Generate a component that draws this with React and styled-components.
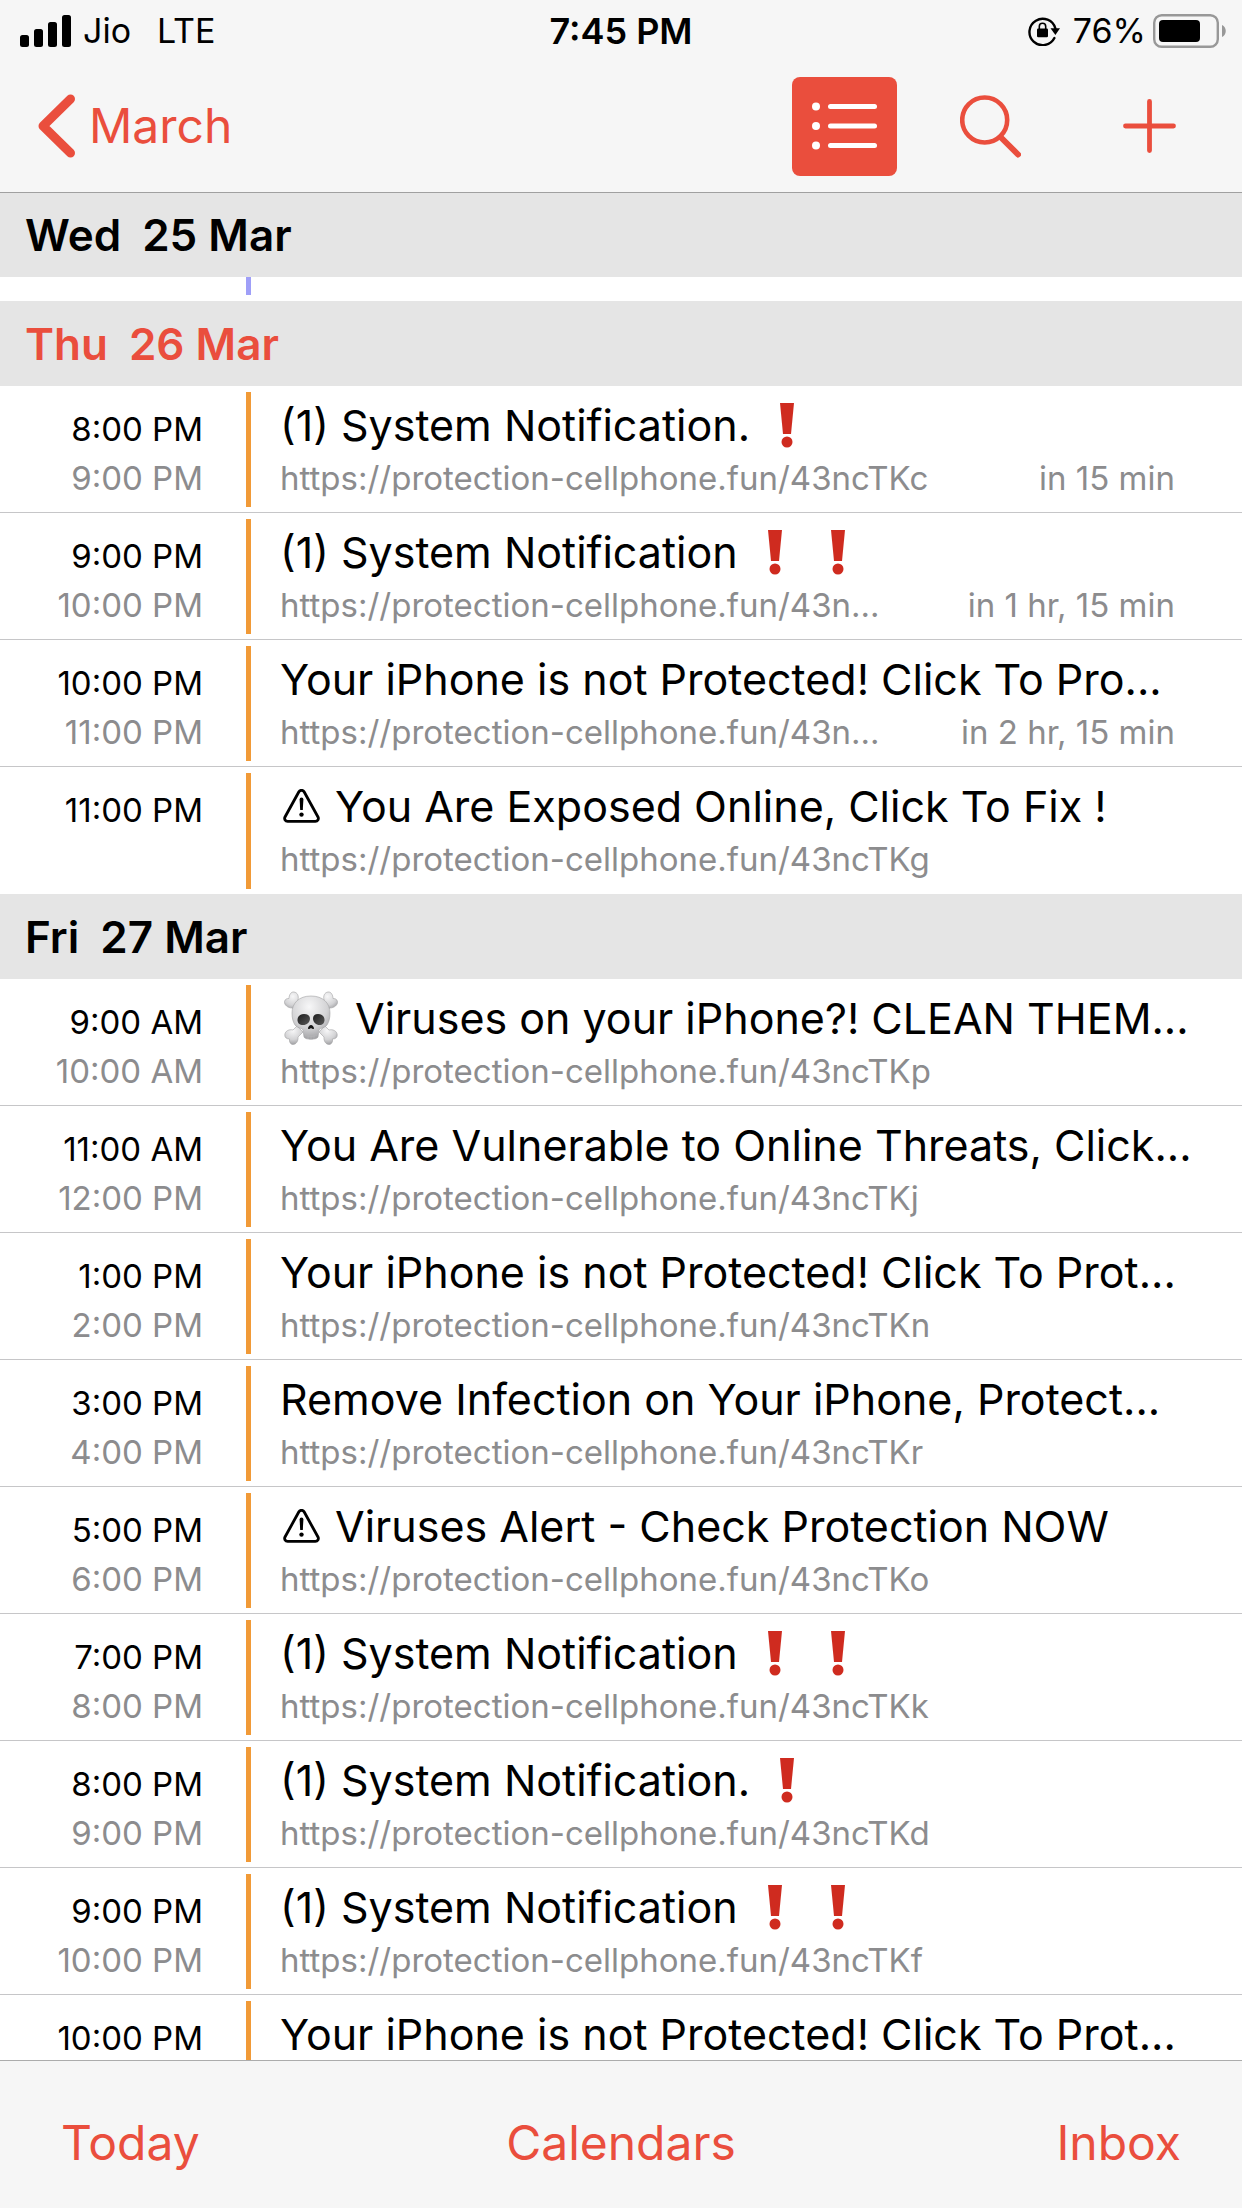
import React from 'react'
import styled, { createGlobalStyle } from 'styled-components'

const red = '#ea4e3d'
const grey = '#8c8c8e'

const GlobalStyle = createGlobalStyle`
    * {
        box-sizing: border-box;
    }
    body {
        margin: 0;
        background: #ffffff;
        color: #000000;
        font-family: Inter, 'Liberation Sans', sans-serif;
    }
`;

const Screen = styled.div`
    display: flex;
    flex-direction: column;
    height: 100vh;
    overflow: hidden;
`;

//top area: status bar and navigation
const Header = styled.header`
    flex: none;
    background: #f6f6f6;
    border-bottom: 1px solid #a0a0a0;
`;

const StatusBar = styled.div`
    display: grid;
    grid-template-columns: 1fr auto 1fr;
    align-items: center;
    height: 60px;
    padding: 2px 16px 0;
    font-size: 34px;
    line-height: 44px;
`;

const StatusGroup = styled.div`
    display: flex;
    align-items: center;
    justify-content: ${props => props.$end ? 'flex-end' : 'flex-start'};
    gap: ${props => props.$end ? '7px' : '12px'};
    padding-left: 4px;
`;

const Network = styled.span`
    margin-left: 14px;
`;

const LockIcon = styled.svg`
    margin-right: 6px;
`;

const Clock = styled.time`
    font-size: 36px;
    font-weight: 600;
`;

const Nav = styled.nav`
    display: flex;
    align-items: center;
    justify-content: space-between;
    height: 132px;
    padding: 0 66px 0 38px;
`;

const TextButton = styled.button`
    display: flex;
    align-items: center;
    gap: 13px;
    padding: 0;
    border: 0;
    background: none;
    color: ${red};
    font-family: inherit;
    font-size: 48px;
    line-height: 60px;
    cursor: pointer;
`;

const Actions = styled.div`
    display: flex;
    align-items: center;
`;

const IconButton = styled.button`
    display: flex;
    align-items: center;
    justify-content: center;
    margin-left: ${props => props.$space || '0'};
    padding: 0;
    border: 0;
    background: none;
    cursor: pointer;
`;

const ListButton = styled(IconButton)`
    width: 105px;
    height: 99px;
    border-radius: 8px;
    background: ${red};
`;

//scrolling agenda
const Agenda = styled.main`
    flex: 1;
    min-height: 0;
    overflow: hidden;
`;

const DayTitle = styled.h2`
    display: flex;
    align-items: center;
    gap: 21px;
    height: ${props => props.$sticky ? '84px' : '85px'};
    margin: 0;
    padding: 0 25px;
    background: #e5e5e5;
    color: ${props => props.$today ? red : '#000000'};
    font-size: 44px;
    font-weight: 600;
    line-height: 52px;
`;

const Remainder = styled.div`
    display: flex;
    height: 24px;
    padding: 0 0 6px 246px;
`;

const EventList = styled.ul`
    margin: 0;
    padding: 0;
    list-style: none;
`;

const Event = styled.li`
    display: flex;
    height: 127px;
    border-bottom: 1px solid #c6c6c8;
    &:last-child {
        border-bottom: 0;
    }
`;

const Hours = styled.div`
    flex: none;
    display: flex;
    flex-direction: column;
    gap: 9px;
    width: 203px;
    padding-top: 23px;
    font-size: 33px;
    line-height: 40px;
    text-align: right;
`;

const EndHour = styled.span`
    color: ${grey};
`;

const Bar = styled.div`
    flex: none;
    width: 5px;
    margin: ${props => props.$color ? '0' : '6px 0 5px 43px'};
    background: ${props => props.$color || '#f19a37'};
`;

const Body = styled.div`
    flex: 1;
    display: flex;
    flex-direction: column;
    gap: 7px;
    min-width: 0;
    padding: 13px 0 0 29px;
`;

const Title = styled.div`
    display: flex;
    align-items: center;
    height: 52px;
    font-size: 43px;
    line-height: 52px;
    white-space: pre;
`;

const Details = styled.div`
    display: flex;
    justify-content: space-between;
    padding-right: 67px;
    color: ${grey};
    font-size: 33px;
    line-height: 40px;
    white-space: nowrap;
`;

const Mark = styled.svg`
    flex: none;
    margin: 0 ${props => props.$right || '0'} 0 ${props => props.$left || '0'};
`;

const Toolbar = styled.footer`
    flex: none;
    display: grid;
    grid-template-columns: 1fr auto 1fr;
    align-items: center;
    height: 148px;
    padding: 16px 61px 0;
    border-top: 1px solid #acacac;
    background: #f6f6f6;
`;

const InboxButton = styled(TextButton)`
    justify-self: end;
`;

function Exclamation({ left }){
    return(
        <Mark $left={left} width="14" height="45" viewBox="0 0 14 45" role="img" aria-label="Important">
            <path d="M0 0H14L11 31H3Z" fill="#cf2b1f" />
            <circle cx="7" cy="39" r="5.5" fill="#cf2b1f" />
        </Mark>
    )
}

function Warning(){
    return(
        <Mark $left="3px" $right="15px" width="37" height="34" viewBox="0 0 37 34" role="img" aria-label="Warning">
            <path d="M15.9 2.8a3 3 0 0 1 5.2 0L35 28a3 3 0 0 1-2.6 4.4H4.6A3 3 0 0 1 2 28Z" fill="none" stroke="#000000" strokeWidth="2.8" />
            <path d="M16.6 10.5a1.9 1.9 0 0 1 3.8 0L19.8 21h-2.6Z" />
            <circle cx="18.5" cy="25.6" r="2.2" />
        </Mark>
    )
}

function Skull(){
    return(
        <Mark $left="4px" $right="17px" width="54" height="54" viewBox="0 0 54 54" role="img" aria-label="Skull and crossbones">
            <defs>
                <radialGradient id="bone" cx="0.45" cy="0.25" r="0.8">
                    <stop offset="0" stopColor="#f7f7f8" />
                    <stop offset="0.6" stopColor="#d3d3d5" />
                    <stop offset="1" stopColor="#98989b" />
                </radialGradient>
                <linearGradient id="socket" x1="0" y1="0" x2="1" y2="1">
                    <stop offset="0" stopColor="#1c1c1c" />
                    <stop offset="1" stopColor="#5a5a5a" />
                </linearGradient>
            </defs>
            <g fill="url(#bone)" stroke="#a2a2a5" strokeWidth="0.6">
                <path d="M8 17C4 17 0 14 0.5 10.500C1 8 3 7.500 5 7.500C5 4 7 0.500 10 1C13.500 1.500 15 5 14 9L19 14L13 19Z" />
                <path d="M46 17C50 17 54 14 53.500 10.500C53 8 51 7.500 49 7.500C49 4 47 0.500 44 1C40.500 1.500 39 5 40 9L35 14L41 19Z" />
                <path d="M13 35L19 41L14 46C14.500 50 12 53.500 9 53.500C6.500 53.500 5 51 5.500 48C2.500 48 0.500 46.500 0.800 43.500C1.200 40 5 38 9 39Z" />
                <path d="M41 35L35 41L40 46C39.500 50 42 53.500 45 53.500C47.500 53.500 49 51 48.500 48C51.500 48 53.500 46.500 53.200 43.500C52.800 40 49 38 45 39Z" />
                <path d="M27 5C15 5 8 12 8 22C8 27 9 31 11 34C13 37 18 37 19 39L20 46C21 49 33 49 34 46L35 39C36 37 41 37 43 34C45 31 46 27 46 22C46 12 39 5 27 5Z" />
            </g>
            <path d="M13.500 29C13.500 25 16.500 23 20 23C24 23 26 25 26 28C25.500 31.500 23 34 19 34C15.500 34 13.500 32 13.500 29Z" fill="url(#socket)" />
            <path d="M40.500 29C40.500 25 37.500 23 34 23C30.500 23 29 25 29 28C29.500 31.500 32 34 35.500 34C38.500 34 40.500 32 40.500 29Z" fill="url(#socket)" />
            <path d="M27 34C28.500 34 30 36 30 37.500C29.500 38.500 28 38 27 37C26 38 24.500 38.500 24 37.500C24 36 25.500 34 27 34Z" fill="#151515" />
            <path d="M21 44C24 46 30 46 33 44M24 44V48M27 45V48M30 44V48" fill="none" stroke="#b4b4b6" strokeWidth="0.8" />
        </Mark>
    )
}

const host = 'https://protection-cellphone.fun/'

const thursday = [
    { start: '8:00 PM', end: '9:00 PM', title: '(1) System Notification.', marks: 1, path: '43ncTKc', left: 'in 15 min' },
    { start: '9:00 PM', end: '10:00 PM', title: '(1) System Notification', marks: 2, path: '43n...', left: 'in 1 hr, 15 min' },
    { start: '10:00 PM', end: '11:00 PM', title: 'Your iPhone is not Protected! Click To Pro...', path: '43n...', left: 'in 2 hr, 15 min' },
    { start: '11:00 PM', icon: <Warning />, title: 'You Are Exposed Online, Click To Fix !', path: '43ncTKg' },
]

const friday = [
    { start: '9:00 AM', end: '10:00 AM', icon: <Skull />, title: 'Viruses on your iPhone?! CLEAN THEM...', path: '43ncTKp' },
    { start: '11:00 AM', end: '12:00 PM', title: 'You Are Vulnerable to Online Threats, Click...', path: '43ncTKj' },
    { start: '1:00 PM', end: '2:00 PM', title: 'Your iPhone is not Protected! Click To Prot...', path: '43ncTKn' },
    { start: '3:00 PM', end: '4:00 PM', title: 'Remove Infection on Your iPhone, Protect...', path: '43ncTKr' },
    { start: '5:00 PM', end: '6:00 PM', icon: <Warning />, title: 'Viruses Alert - Check Protection NOW', path: '43ncTKo' },
    { start: '7:00 PM', end: '8:00 PM', title: '(1) System Notification', marks: 2, path: '43ncTKk' },
    { start: '8:00 PM', end: '9:00 PM', title: '(1) System Notification.', marks: 1, path: '43ncTKd' },
    { start: '9:00 PM', end: '10:00 PM', title: '(1) System Notification', marks: 2, path: '43ncTKf' },
    { start: '10:00 PM', title: 'Your iPhone is not Protected! Click To Prot...' },
]

function Events({ items }){
    return(
        <EventList>
            {items.map((item, index) => (
                <Event key={index}>
                    <Hours>
                        <span>{item.start}</span>
                        {item.end && <EndHour>{item.end}</EndHour>}
                    </Hours>
                    <Bar />
                    <Body>
                        <Title>
                            {item.icon}
                            <span>{item.title}</span>
                            {item.marks > 0 && <Exclamation left="30px" />}
                            {item.marks > 1 && <Exclamation left="49px" />}
                        </Title>
                        {item.path && (
                            <Details>
                                <span>{host + item.path}</span>
                                {item.left && <span>{item.left}</span>}
                            </Details>
                        )}
                    </Body>
                </Event>
            ))}
        </EventList>
    )
}

export default function App(){
    return(
        <>
        <GlobalStyle />
        <Screen>
            <Header>
                <StatusBar>
                    <StatusGroup>
                        <svg width="51" height="32" viewBox="0 0 51 32" aria-hidden="true">
                            <rect x="0" y="20" width="9" height="12" rx="2.5" />
                            <rect x="14" y="14" width="9" height="18" rx="2.5" />
                            <rect x="28" y="7" width="9" height="25" rx="2.5" />
                            <rect x="42" y="0" width="9" height="32" rx="2.5" />
                        </svg>
                        <span>Jio</span>
                        <Network>LTE</Network>
                    </StatusGroup>
                    <Clock>7:45 PM</Clock>
                    <StatusGroup $end>
                        <LockIcon width="32" height="30" viewBox="0 0 32 30" aria-hidden="true">
                            <path d="M26.400 22A13.200 13.200 0 1 1 27.400 12.500" fill="none" stroke="#000000" strokeWidth="2.4" strokeLinecap="round" />
                            <path d="M22.500 12.200H32L27.400 19Z" />
                            <rect x="9" y="12.500" width="11" height="8.700" rx="1.200" />
                            <path d="M11.300 13V10.500a3.200 3.200 0 0 1 6.400 0V13" fill="none" stroke="#000000" strokeWidth="1.600" />
                        </LockIcon>
                        <span>76%</span>
                        <svg width="73" height="34" viewBox="0 0 73 34" aria-hidden="true">
                            <rect x="1.200" y="1.200" width="63.600" height="31.600" rx="7.500" fill="none" stroke="#989898" strokeWidth="2.400" />
                            <rect x="6" y="6" width="41" height="22" rx="4" />
                            <path d="M69 11C74 13 74 21 69 23Z" fill="#989898" />
                        </svg>
                    </StatusGroup>
                </StatusBar>
                <Nav>
                    <TextButton>
                        <svg width="38" height="64" viewBox="0 0 38 64" aria-hidden="true">
                            <path d="M32.500 5L5 32L32.500 59" fill="none" stroke={red} strokeWidth="9" strokeLinecap="round" strokeLinejoin="round" />
                        </svg>
                        March
                    </TextButton>
                    <Actions>
                        <ListButton aria-label="List view">
                            <svg width="66" height="48" viewBox="0 0 66 48" fill="#ffffff" aria-hidden="true">
                                <circle cx="4" cy="4.500" r="4" />
                                <circle cx="4" cy="24" r="4" />
                                <circle cx="4" cy="43.500" r="4" />
                                <rect x="16" y="2" width="49" height="5" rx="2.500" />
                                <rect x="16" y="21.500" width="49" height="5" rx="2.500" />
                                <rect x="16" y="41" width="49" height="5" rx="2.500" />
                            </svg>
                        </ListButton>
                        <IconButton $space="63px" aria-label="Search">
                            <svg width="61" height="63" viewBox="0 0 61 63" fill="none" stroke={red} aria-hidden="true">
                                <circle cx="24.700" cy="25" r="22.500" strokeWidth="4.600" />
                                <path d="M41.500 43L58 59.500" strokeWidth="6" strokeLinecap="round" />
                            </svg>
                        </IconButton>
                        <IconButton $space="102px" aria-label="Add event">
                            <svg width="53" height="54" viewBox="0 0 53 54" fill="none" stroke={red} strokeWidth="4.800" strokeLinecap="round" aria-hidden="true">
                                <path d="M26.500 2.500V51.500M2.500 27H50.500" />
                            </svg>
                        </IconButton>
                    </Actions>
                </Nav>
            </Header>
            <Agenda>
                <DayTitle $sticky><span>Wed</span><span>25 Mar</span></DayTitle>
                <Remainder><Bar $color="#9f9ff8" /></Remainder>
                <DayTitle $today><span>Thu</span><span>26 Mar</span></DayTitle>
                <Events items={thursday} />
                <DayTitle><span>Fri</span><span>27 Mar</span></DayTitle>
                <Events items={friday} />
            </Agenda>
            <Toolbar>
                <TextButton>Today</TextButton>
                <TextButton>Calendars</TextButton>
                <InboxButton>Inbox</InboxButton>
            </Toolbar>
        </Screen>
        </>
    )
}
